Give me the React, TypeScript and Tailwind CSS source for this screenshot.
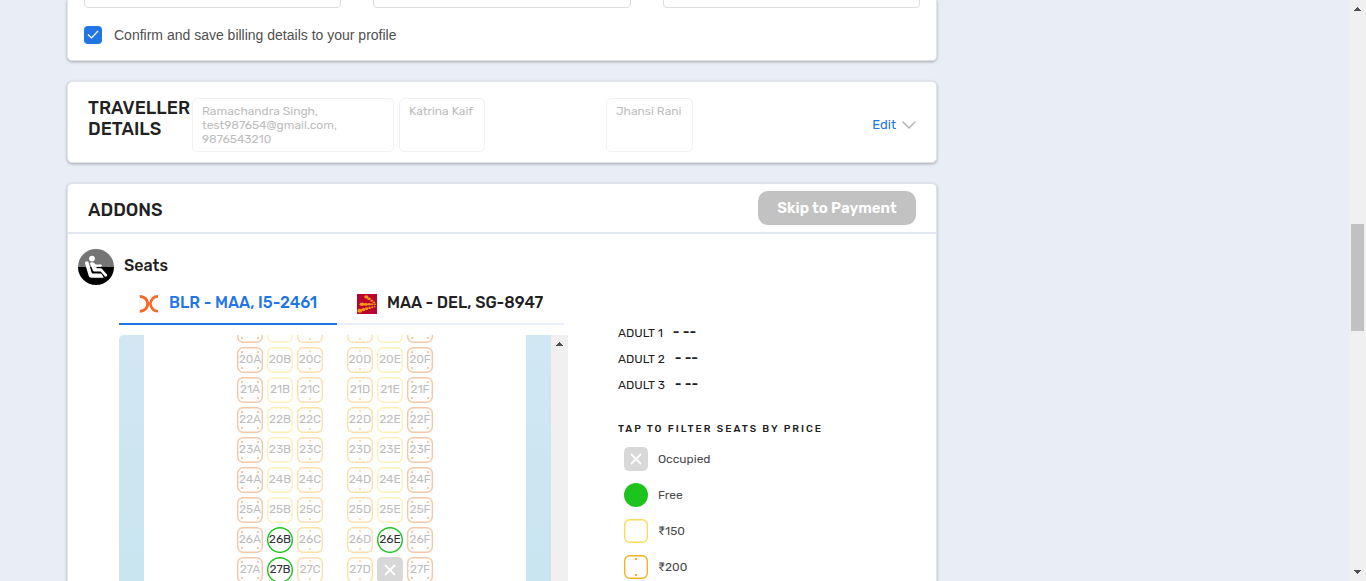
import React from "react";

type SeatKind = "yellow" | "amber" | "orange" | "free" | "occupied";

const seatText: Record<SeatKind, string> = {
  yellow: "text-[#bdbdbd]",
  amber: "text-[#bdbdbd]",
  orange: "text-[#bdbdbd]",
  free: "text-[#333340]",
  occupied: "rounded-[5px] bg-[#d8d8d8] text-white",
};

const columnKinds: Record<string, SeatKind> = {
  A: "orange",
  B: "yellow",
  C: "amber",
  D: "amber",
  E: "yellow",
  F: "orange",
};

const specialSeats: Record<string, SeatKind> = {
  "26B": "free",
  "26E": "free",
  "27B": "free",
  "27E": "occupied",
};

const firstRow = 19;
const rows = [19, 20, 21, 22, 23, 24, 25, 26, 27];

function Cross() {
  return (
    <svg viewBox="0 0 24 24" className="size-6" stroke="white" strokeWidth="1.800" fill="none" aria-hidden="true">
      <path d="M7 7l10 10M17 7L7 17" />
    </svg>
  );
}

const frameColors: Record<SeatKind, string> = {
  yellow: "#fdf0b8",
  amber: "#fce0a8",
  orange: "#f2c8a8",
  free: "#1ec41e",
  occupied: "none",
};

function SeatFrame({ kind }: { kind: SeatKind }) {
  const color = frameColors[kind];
  return (
    <svg viewBox="0 0 26 26" className="absolute inset-0 size-[26px]" fill="none" aria-hidden="true">
      <rect x="0.700" y="0.700" width="24.600" height="24.600" rx={kind === "free" ? 12.3 : 5.5} stroke={color} strokeWidth="1.400" />
      {kind === "amber" && <path d="M12 3h2v2h-2zM12 21h2v2h-2z" fill={color} />}
      {kind === "orange" && <path d="M4 4h2v2H4zM20 4h2v2h-2zM4 20h2v2H4zM20 20h2v2h-2z" fill={color} />}
    </svg>
  );
}

function Seat({ row, column }: { row: number; column: string }) {
  const id = `${row}${column}`;
  const kind = specialSeats[id] ?? columnKinds[column];
  return (
    <button
      type="button"
      aria-label={`Seat ${id}`}
      disabled={kind === "occupied"}
      className={`relative flex size-[26px] items-center justify-center text-[12px] leading-6 ${seatText[kind]}`}
    >
      {kind === "occupied" ? <Cross /> : <SeatFrame kind={kind} />}
      {kind !== "occupied" && row !== firstRow && <span className="relative pb-0.5">{id}</span>}
    </button>
  );
}

function SeatMap() {
  return (
    <div className="flex h-[300px] overflow-hidden rounded-tl-[5px]">
      <div className="w-[25px] bg-linear-to-b from-[#d1e8f3] to-[#c6e4ef]" />
      <div className="flex flex-1 justify-center">
        <div className="-mt-[18px] flex flex-col gap-1">
          {rows.map((row) => (
            <div key={row} className="flex gap-6">
              {["ABC", "DEF"].map((group) => (
                <div key={group} className="flex gap-1">
                  {group.split("").map((column) => (
                    <Seat key={column} row={row} column={column} />
                  ))}
                </div>
              ))}
            </div>
          ))}
        </div>
      </div>
      <div className="w-[25px] bg-linear-to-b from-[#d1e8f3] to-[#c6e4ef]" />
      <div className="flex w-[17px] justify-center bg-[#f0f0f0] pt-[7px]">
        <svg viewBox="0 0 7 4" className="h-1 w-[7px]" fill="#505050" shapeRendering="crispEdges" aria-hidden="true">
          <path d="M3 0h1v1h1v1h1v1h1v1H0V3h1V2h1V1h1z" />
        </svg>
      </div>
    </div>
  );
}

function SeatIcon() {
  return (
    <svg viewBox="0 0 36 36" className="size-9" aria-hidden="true">
      <path d="M0 18a18 18 0 0 1 36 0z" fill="#757575" />
      <path d="M0 18a18 18 0 0 0 36 0z" fill="#000" />
      <circle cx="14" cy="9.600" r="2.900" fill="#fff" />
      <path
        d="M7 14.200C6.600 12.400 9.600 11.200 10.500 13.200L13.500 23.200C13.800 24 14.400 24.500 15.200 24.500H22C23 24.500 23.600 24.900 24.100 25.700L25.800 28.800H13.500C11.800 28.800 11 28 10.600 26.600Z"
        fill="#fff"
      />
      <path
        d="M12 14.500C12 13.200 14.500 12.600 15.700 13.700L18 15.600H22.800C24.300 15.600 24.300 17.800 22.800 17.800H18.200L18.800 19.300H22.200C23.200 19.300 23.700 19.600 24.300 20.300L29 25.600C29.900 27 27.900 28.500 26.800 27.300L22.700 22.600H17C15.800 22.600 15.100 22.100 14.700 21.100Z"
        fill="#fff"
      />
    </svg>
  );
}

function OrangeAirlineLogo() {
  return (
    <svg viewBox="0 0 20 20" className="size-5" fill="none" stroke="#f86a2a" aria-hidden="true">
      <path d="M0.800 3.400C5.500 3.200 8.800 7 8.800 10.800S5.500 18.400 0.800 18.200" strokeWidth="3" />
      <path d="M19 3.400C14.500 3.200 12.300 6.500 11.200 10.800C12.300 15 14.500 18.400 19 18.200" strokeWidth="2.600" />
    </svg>
  );
}

function RedAirlineLogo() {
  return (
    <svg viewBox="0 0 20 20" className="size-5" aria-hidden="true">
      <path d="M0 0h20v20H0z" fill="#b8042f" />
      <g fill="#fb9a14">
        <ellipse cx="9.300" cy="2.800" rx="2.100" ry="1.600" />
        <ellipse cx="12" cy="4.800" rx="1.800" ry="1.300" />
        <ellipse cx="14.700" cy="6.700" rx="1.500" ry="1.100" />
        <ellipse cx="17" cy="8.300" rx="1.200" ry="0.900" />
        <ellipse cx="5" cy="10.300" rx="2.500" ry="1.800" />
        <ellipse cx="8.900" cy="10.300" rx="2" ry="1.500" />
        <ellipse cx="12.300" cy="10.200" rx="1.600" ry="1.200" />
        <ellipse cx="15.300" cy="10.200" rx="1.300" ry="1" />
        <ellipse cx="18" cy="10.200" rx="1" ry="0.800" />
        <ellipse cx="2.800" cy="16.800" rx="2.500" ry="2" />
        <ellipse cx="6.500" cy="15.600" rx="2" ry="1.700" />
        <ellipse cx="9.700" cy="14.700" rx="1.600" ry="1.400" />
        <ellipse cx="12.600" cy="13.900" rx="1.300" ry="1.200" />
        <ellipse cx="15.200" cy="13.200" rx="1.100" ry="1" />
        <ellipse cx="17.600" cy="12.600" rx="0.900" ry="0.800" />
      </g>
    </svg>
  );
}

const cardClass = "rounded-[5px] border border-[#e1e3e8] bg-white shadow-[0_1px_3px_rgba(0,0,0,0.3)]";

function Traveller({ lines, className }: { lines: string[]; className: string }) {
  return (
    <div className={className}>
      <div className="h-[54px] rounded-[5px] border border-[#f2f2f2] px-[9px] pt-[5px] text-[12px] leading-[14px] text-[#bdbdbd]">
        {lines.map((line) => (
          <div key={line}>{line}</div>
        ))}
      </div>
    </div>
  );
}

const adults = ["ADULT 1", "ADULT 2", "ADULT 3"];

export default function App() {
  return (
    <div className="flex h-screen overflow-hidden bg-[#e9edf6] font-[Rubik,Inter,sans-serif] text-[#212121]">
      <main className="min-w-0 flex-1 pl-[67px]">
        <div className="flex w-full max-w-[870px] flex-col gap-5">
          <section className={`${cardClass} h-[61px] rounded-t-none border-t-0 px-4`}>
            <div className="grid h-2 grid-cols-3 content-end gap-8 overflow-hidden">
              {["Company name", "Address", "City"].map((label) => (
                <input key={label} aria-label={label} className="h-10 w-full rounded-[4px] border border-[#dcdcdc]" />
              ))}
            </div>
            <label className="mt-[18px] flex items-center gap-3 font-['Liberation_Sans',sans-serif] text-[14px] leading-[18px] text-[#4f4f4f]">
              <span className="relative flex size-[18px]">
                <input type="checkbox" defaultChecked className="size-[18px] appearance-none rounded-[4px] bg-[#2276e3]" />
                <svg viewBox="0 0 18 18" className="pointer-events-none absolute inset-0" fill="none" stroke="white" strokeWidth="1.200" aria-hidden="true">
                  <path d="M4 8.500l3.500 3.500L14 5" />
                </svg>
              </span>
              Confirm and save billing details to your profile
            </label>
          </section>

          <section className={`${cardClass} flex h-[82px] items-start px-5 pt-4`}>
            <h2 className="w-[104px] text-[18px] leading-[21px] font-medium">TRAVELLER DETAILS</h2>
            <div className="flex flex-1">
              <Traveller className="w-[202px]" lines={["Ramachandra Singh,", "test987654@gmail.com,", "9876543210"]} />
              <Traveller className="ml-[5px] w-[86px]" lines={["Katrina Kaif"]} />
              <Traveller className="ml-[121px] w-[87px]" lines={["Jhansi Rani"]} />
            </div>
            <button type="button" className="mt-[18px] flex items-center gap-1.5 text-[13px] leading-[18px] text-[#2276e3]">
              Edit
              <svg viewBox="0 0 14 8" className="h-2 w-3.5" fill="none" stroke="#b5b5b5" strokeWidth="1.500" aria-hidden="true">
                <path d="M0.500 0.500L7 7l6.500-6.500" />
              </svg>
            </button>
          </section>

          <section className={`${cardClass} rounded-b-none`}>
            <header className="flex h-[50px] items-center justify-between border-b-2 border-[#e2e6f0] px-5">
              <h2 className="pt-1 text-[18px] leading-[21px] font-medium">ADDONS</h2>
              <button type="button" className="h-[34px] w-[158px] rounded-[10px] bg-[#c2c2c2] text-[15px] font-semibold text-white">
                Skip to Payment
              </button>
            </header>
            <div className="flex items-center gap-2.5 px-2.5 pt-[15px]">
              <SeatIcon />
              <h3 className="pb-0.5 text-[16px] leading-5 font-medium">Seats</h3>
            </div>
            <div className="flex pl-[51px]">
              <div className="w-[449px]">
                <div className="mr-1 flex border-b-2 border-[#e9f1fd]">
                  <button type="button" className="-mb-0.5 flex h-10 w-[218px] items-center gap-2.5 border-b-2 border-[#2276e3] pb-0.5 pl-5 text-[16px] font-medium whitespace-nowrap text-[#2276e3]">
                    <OrangeAirlineLogo />
                    BLR - MAA, I5-2461
                  </button>
                  <button type="button" className="flex h-[38px] items-center gap-2.5 pl-5 text-[16px] font-medium whitespace-nowrap">
                    <RedAirlineLogo />
                    <span className="pb-0.5">MAA - DEL, SG-8947</span>
                  </button>
                </div>
                <div className="mt-2.5">
                  <SeatMap />
                </div>
              </div>
              <aside className="pt-[35px] pl-[50px]">
                <ul className="flex flex-col text-[12px] leading-[26px]">
                  {adults.map((adult) => (
                    <li key={adult} className="flex gap-2.5">
                      <span>{adult}</span>
                      <span className="text-[14px] font-medium">- --</span>
                    </li>
                  ))}
                </ul>
                <h4 className="mt-[23px] text-[10px] leading-4 font-medium tracking-[2px]">TAP TO FILTER SEATS BY PRICE</h4>
                <div className="mt-2.5 flex flex-col gap-3 pl-1.5 text-[12px] text-[#4a4a4a]">
                  <button type="button" className="flex items-center gap-2.5">
                    <span className="size-6 rounded-[5px] bg-[#d8d8d8]"><Cross /></span>Occupied
                  </button>
                  <button type="button" className="flex items-center gap-2.5">
                    <span className="size-6 rounded-full bg-[#1ec41e]" />Free
                  </button>
                  <button type="button" className="flex items-center gap-2.5">
                    <svg viewBox="0 0 24 24" className="size-6" fill="none" stroke="#f8dc5c" strokeWidth="1.400" aria-hidden="true">
                      <rect x="0.700" y="0.700" width="22.600" height="22.600" rx="5" />
                    </svg>
                    ₹150
                  </button>
                  <button type="button" className="flex items-center gap-2.5">
                    <svg viewBox="0 0 24 24" className="size-6" fill="none" aria-hidden="true">
                      <rect x="0.700" y="0.700" width="22.600" height="22.600" rx="5" stroke="#f5b324" strokeWidth="1.400" />
                      <path d="M11 3h2v2h-2zM11 19h2v2h-2z" fill="#f5b324" />
                    </svg>
                    ₹200
                  </button>
                </div>
              </aside>
            </div>
          </section>
        </div>
      </main>
      <div className="flex w-[17px] flex-col items-center bg-[#f0f0f0] py-[7px]">
        <svg viewBox="0 0 7 4" className="h-1 w-[7px]" fill="#505050" shapeRendering="crispEdges" aria-hidden="true">
          <path d="M3 0h1v1h1v1h1v1h1v1H0V3h1V2h1V1h1z" />
        </svg>
        <div className="mt-[213px] h-[107px] w-[13px] bg-[#c1c1c1]" />
        <svg viewBox="0 0 7 4" className="mt-auto h-1 w-[7px]" fill="#505050" shapeRendering="crispEdges" aria-hidden="true">
          <path d="M0 0h7v1H6v1H5v1H4v1H3V3H2V2H1V1H0z" />
        </svg>
      </div>
    </div>
  );
}
